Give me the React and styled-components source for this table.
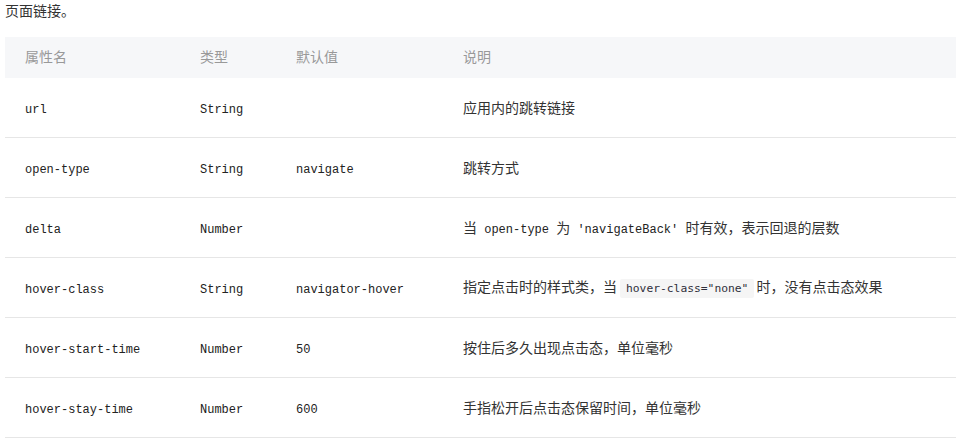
import React from "react"
import styled, { createGlobalStyle } from "styled-components"

const GlobalStyle = createGlobalStyle`
   html, body {
      margin: 0;
      padding: 0;
      background: #fff;
      overflow: hidden;
   }
   body {
      font-family: "Noto Sans CJK SC", "Noto Sans", sans-serif;
      color: #333;
   }
`

const rows = [
   { name: "url", type: "String", def: "", desc: [["t", "应用内的跳转链接"]] },
   { name: "open-type", type: "String", def: "navigate", desc: [["t", "跳转方式"]] },
   {
      name: "delta",
      type: "Number",
      def: "",
      desc: [
         ["t", "当"],
         ["m", " open-type "],
         ["t", "为"],
         ["m", " 'navigateBack' "],
         ["t", "时有效，表示回退的层数"],
      ],
   },
   {
      name: "hover-class",
      type: "String",
      def: "navigator-hover",
      desc: [
         ["t", "指定点击时的样式类，当"],
         ["c", 'hover-class="none"'],
         ["t", "时，没有点击态效果"],
      ],
   },
   { name: "hover-start-time", type: "Number", def: "50", desc: [["t", "按住后多久出现点击态，单位毫秒"]] },
   { name: "hover-stay-time", type: "Number", def: "600", desc: [["t", "手指松开后点击态保留时间，单位毫秒"]] },
]

const App = () => {
   const renderDesc = (parts) =>
      parts.map(([kind, text], i) => {
         if (kind === "m") return <Mono key={i}>{text}</Mono>
         if (kind === "c") return <Code key={i}>{text}</Code>
         return <span key={i}>{text}</span>
      })

   return (
      <>
         <GlobalStyle />
         <Page>
            <Intro>页面链接。</Intro>
            <Table>
               <Head>
                  <HeadCell $w={175}>属性名</HeadCell>
                  <HeadCell $w={96}>类型</HeadCell>
                  <HeadCell $w={167}>默认值</HeadCell>
                  <HeadCell>说明</HeadCell>
               </Head>
               {rows.map((row) => (
                  <Row key={row.name}>
                     <Cell $w={175}><Mono>{row.name}</Mono></Cell>
                     <Cell $w={96}><Mono>{row.type}</Mono></Cell>
                     <Cell $w={167}><Mono>{row.def}</Mono></Cell>
                     <Cell>{renderDesc(row.desc)}</Cell>
                  </Row>
               ))}
            </Table>
         </Page>
      </>
   )
}

const Page = styled.div`
   padding-left: 5px;
   width: 951px;
`

const Intro = styled.p`
   margin: -2px 0 15px;
   font-size: 14px;
   line-height: 24px;
   color: #333;
`

const Table = styled.div`
   display: flex;
   flex-direction: column;
   width: 951px;
`

const Head = styled.div`
   display: flex;
   align-items: center;
   height: 41px;
   padding-bottom: 3px;
   box-sizing: border-box;
   background: #f6f7f9;
`

const HeadCell = styled.div`
   flex: ${(p) => (p.$w ? `0 0 ${p.$w}px` : "1")};
   padding-left: 20px;
   box-sizing: border-box;
   font-size: 14px;
   color: #999;
`

const Row = styled.div`
   display: flex;
   align-items: center;
   height: 60px;
   padding-bottom: 2px;
   border-bottom: 1px solid #e6e6e6;
   box-sizing: border-box;
`

const Cell = styled.div`
   flex: ${(p) => (p.$w ? `0 0 ${p.$w}px` : "1")};
   padding-left: 20px;
   box-sizing: border-box;
   font-size: 14px;
   color: #333;
   white-space: pre;
`

const Mono = styled.span`
   font-family: "Liberation Mono", "DejaVu Sans Mono", monospace;
   font-size: 12px;
   color: #222;
   white-space: pre;
`

const Code = styled.code`
   display: inline-block;
   margin: 0 2px 0 3px;
   padding: 0 6px;
   line-height: 19px;
   background: #f5f5f5;
   font-family: "DejaVu Sans Mono", monospace;
   font-size: 11.3px;
   color: #2f2f3a;
   border-radius: 2px;
`

export default App
